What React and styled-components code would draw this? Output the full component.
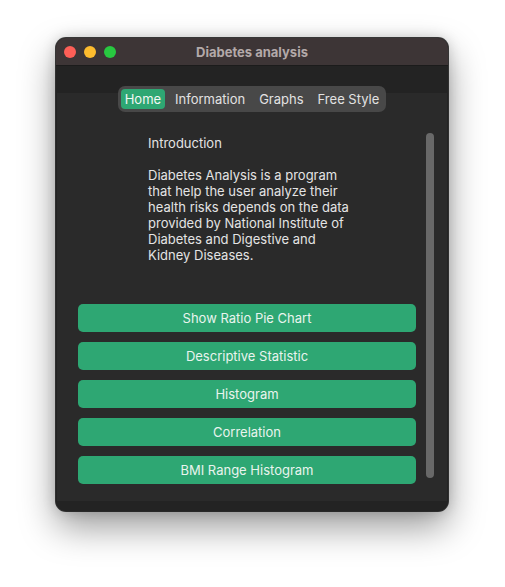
import React from 'react';
import styled, { createGlobalStyle } from 'styled-components';

const GlobalStyle = createGlobalStyle`
  html, body {
    margin: 0;
    padding: 0;
    background: #ffffff;
  }
  body {
    font-family: Inter, "Noto Sans", "Liberation Sans", sans-serif;
    -webkit-font-smoothing: antialiased;
  }
`

const Page = styled.div`
  width: 505px;
  height: 587px;
  padding: 38px 0 0 56px;
  box-sizing: border-box;
`

const Window = styled.div`
  width: 392px;
  height: 473px;
  border-radius: 10px;
  overflow: hidden;
  background: #232323;
  display: flex;
  flex-direction: column;
  box-shadow: 0 0 0 1px rgba(0, 0, 0, 0.75), 0 16px 36px rgba(0, 0, 0, 0.4), 0 0 14px rgba(0, 0, 0, 0.18);
`

const TitleBar = styled.div`
  height: 28px;
  flex: none;
  background: #3d3536;
  border-bottom: 1px solid #1b1b1b;
  box-sizing: border-box;
  display: flex;
  align-items: center;
  padding-left: 8px;
  position: relative;
`

const Lights = styled.div`
  display: flex;
  gap: 8px;
`

const Light = styled.span`
  width: 12px;
  height: 12px;
  border-radius: 50%;
  background: ${p => p.color};
`

const Title = styled.div`
  position: absolute;
  left: 0;
  right: 0;
  text-align: center;
  font-size: 13px;
  font-weight: 700;
  color: #b3a9a9;
  pointer-events: none;
`

const Band = styled.div`
  height: 27px;
  flex: none;
  background: #232323;
  display: flex;
  justify-content: center;
  align-items: flex-start;
  padding-top: 20px;
  box-sizing: border-box;
  position: relative;
  z-index: 1;
`

const TabBar = styled.div`
  height: 26px;
  box-sizing: border-box;
  padding: 3px;
  border-radius: 7px;
  background: #484848;
  display: flex;
  align-items: stretch;
  gap: 6px;
`

const Tab = styled.div`
  padding: 0 4px;
  border-radius: 4px;
  display: flex;
  align-items: center;
  font-size: 13px;
  color: ${p => (p.active ? '#f2f7f4' : '#e2e2e2')};
  background: ${p => (p.active ? '#2ea773' : 'transparent')};
`

const Pane = styled.div`
  flex: 1;
  margin: 0 1px;
  background: #2a2a2a;
  display: flex;
  min-height: 0;
`

const Bottom = styled.div`
  height: 10px;
  flex: none;
  background: #232323;
`

const Content = styled.div`
  flex: 1;
  padding: 42px 0 0 21px;
`

const Intro = styled.div`
  margin-left: 70px;
  font-size: 13px;
  line-height: 16px;
  color: #e4e4e4;
`

const Line = styled.div`
  height: 16px;
  white-space: nowrap;
`

const Buttons = styled.div`
  margin-top: 41px;
  display: flex;
  flex-direction: column;
  gap: 10px;
`

const Button = styled.div`
  height: 28px;
  border-radius: 5px;
  background: #2ea773;
  color: #e9f4ee;
  font-size: 13px;
  display: flex;
  align-items: center;
  justify-content: center;
`

const Scrollbar = styled.div`
  width: 8px;
  height: 345px;
  margin: 40px 13px 0 10px;
  border-radius: 4px;
  background: #686868;
`

const introLines = [
  'Introduction',
  '',
  'Diabetes Analysis is a program',
  'that help the user analyze their',
  'health risks depends on the data',
  'provided by National Institute of',
  'Diabetes and Digestive and',
  'Kidney Diseases.',
]

const tabs = ['Home', 'Information', 'Graphs', 'Free Style']

const actions = [
  'Show Ratio Pie Chart',
  'Descriptive Statistic',
  'Histogram',
  'Correlation',
  'BMI Range Histogram',
]

export default function App() {
  return (
    <Page>
      <GlobalStyle />
      <Window>
        <TitleBar>
          <Lights>
            <Light color="#fe5f57" />
            <Light color="#febc2e" />
            <Light color="#28c840" />
          </Lights>
          <Title>Diabetes analysis</Title>
        </TitleBar>
        <Band>
          <TabBar>
            {tabs.map(t => (
              <Tab key={t} active={t === 'Home'}>{t}</Tab>
            ))}
          </TabBar>
        </Band>
        <Pane>
          <Content>
            <Intro>
              {introLines.map((l, i) => (
                <Line key={i}>{l}</Line>
              ))}
            </Intro>
            <Buttons>
              {actions.map(a => (
                <Button key={a}>{a}</Button>
              ))}
            </Buttons>
          </Content>
          <Scrollbar />
        </Pane>
        <Bottom />
      </Window>
    </Page>
  );
}
